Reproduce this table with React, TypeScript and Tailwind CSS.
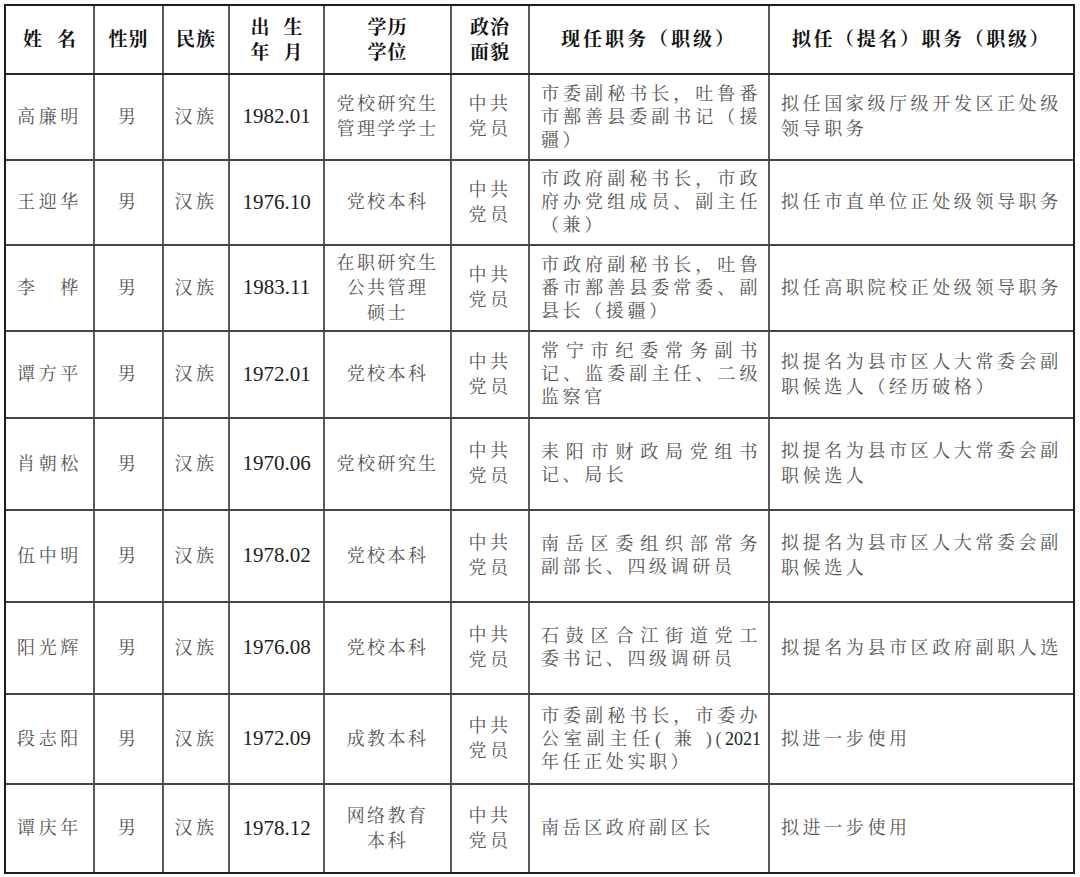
import React from "react";

interface Person {
  name: string;
  date: string;
  edu: string[];
  cur: React.ReactNode[];
  plan: string[];
  h: string;
}

const people: Person[] = [
  {
    name: "高廉明",
    date: "1982.01",
    edu: ["党校研究生", "管理学学士"],
    cur: ["市委副秘书长，吐鲁番", "市鄯善县委副书记（援", "疆）"],
    plan: ["拟任国家级厅级开发区正处级", "领导职务"],
    h: "h-[86px]",
  },
  {
    name: "王迎华",
    date: "1976.10",
    edu: ["党校本科"],
    cur: ["市政府副秘书长，市政", "府办党组成员、副主任", "（兼）"],
    plan: ["拟任市直单位正处级领导职务"],
    h: "h-[85px]",
  },
  {
    name: "李　桦",
    date: "1983.11",
    edu: ["在职研究生", "公共管理", "硕士"],
    cur: ["市政府副秘书长，吐鲁", "番市鄯善县委常委、副", "县长（援疆）"],
    plan: ["拟任高职院校正处级领导职务"],
    h: "h-[86px]",
  },
  {
    name: "谭方平",
    date: "1972.01",
    edu: ["党校本科"],
    cur: ["常宁市纪委常务副书", "记、监委副主任、二级", "监察官"],
    plan: ["拟提名为县市区人大常委会副", "职候选人（经历破格）"],
    h: "h-[87px]",
  },
  {
    name: "肖朝松",
    date: "1970.06",
    edu: ["党校研究生"],
    cur: ["耒阳市财政局党组书", "记、局长"],
    plan: ["拟提名为县市区人大常委会副", "职候选人"],
    h: "h-[92px]",
  },
  {
    name: "伍中明",
    date: "1978.02",
    edu: ["党校本科"],
    cur: ["南岳区委组织部常务", "副部长、四级调研员"],
    plan: ["拟提名为县市区人大常委会副", "职候选人"],
    h: "h-[92px]",
  },
  {
    name: "阳光辉",
    date: "1976.08",
    edu: ["党校本科"],
    cur: ["石鼓区合江街道党工", "委书记、四级调研员"],
    plan: ["拟提名为县市区政府副职人选"],
    h: "h-[92px]",
  },
  {
    name: "段志阳",
    date: "1972.09",
    edu: ["成教本科"],
    cur: [
      "市委副秘书长，市委办",
      <>
        公室副主任( 兼 )(<span className="text-[#222] tracking-normal">2021</span>
      </>,
      "年任正处实职）",
    ],
    plan: ["拟进一步使用"],
    h: "h-[90px]",
  },
  {
    name: "谭庆年",
    date: "1978.12",
    edu: ["网络教育", "本科"],
    cur: ["南岳区政府副区长"],
    plan: ["拟进一步使用"],
    h: "h-[87px]",
  },
];

const vline = "border-r-2 border-[#5a5a5a]";

const App = () => {
  return (
    <div className="w-[1080px] h-[877px] bg-white pt-[4px] pl-[4px] font-['Liberation_Serif','Noto_Serif_CJK_SC','Noto_Sans_CJK_SC',serif]">
      <div className="w-[1071px] border-2 border-[#1e1e1e]">
        {/* Header */}
        <div className="flex h-[69px] border-b-2 border-[#2a2a2a] text-[19px] font-bold text-[#111] leading-[25px]">
          <div className={`w-[89px] flex items-center justify-center ${vline}`}>
            姓<span className="inline-block w-[15px]" />名
          </div>
          <div className={`w-[69px] flex items-center justify-center tracking-[1px] ${vline}`}>
            性别
          </div>
          <div className={`w-[66px] flex items-center justify-center tracking-[1px] ${vline}`}>
            民族
          </div>
          <div className={`w-[95px] flex flex-col items-center justify-center ${vline}`}>
            <div>
              出<span className="inline-block w-[14px]" />生
            </div>
            <div>
              年<span className="inline-block w-[14px]" />月
            </div>
          </div>
          <div className={`w-[127px] flex flex-col items-center justify-center tracking-[1px] ${vline}`}>
            <div>学历</div>
            <div>学位</div>
          </div>
          <div className={`w-[78px] flex flex-col items-center justify-center tracking-[1px] ${vline}`}>
            <div>政治</div>
            <div>面貌</div>
          </div>
          <div className={`w-[240px] flex items-center justify-center tracking-[3px] ${vline}`}>
            现任职务（职级）
          </div>
          <div className="flex-1 flex items-center justify-center tracking-[2.6px]">
            拟任（提名）职务（职级）
          </div>
        </div>

        {/* Body rows */}
        {people.map((p, i) => (
          <div
            key={p.name}
            className={`flex ${p.h} ${
              i === people.length - 1 ? "" : "border-b-2 border-[#444]"
            } text-[18px] text-[#555] tracking-[3.6px]`}
          >
            <div className={`w-[89px] flex items-center justify-center ${vline}`}>
              {p.name}
            </div>
            <div className={`w-[69px] flex items-center justify-center ${vline}`}>
              男
            </div>
            <div className={`w-[66px] flex items-center justify-center ${vline}`}>
              汉族
            </div>
            <div
              className={`w-[95px] flex items-center justify-center text-[21px] text-[#1c1c1c] tracking-normal ${vline}`}
            >
              {p.date}
            </div>
            <div
              className={`w-[127px] flex flex-col items-center justify-center leading-[25px] tracking-[2.4px] ${vline}`}
            >
              {p.edu.map((l, k) => (
                <div key={k}>{l}</div>
              ))}
            </div>
            <div
              className={`w-[78px] flex flex-col items-center justify-center leading-[25px] ${vline}`}
            >
              <div>中共</div>
              <div>党员</div>
            </div>
            <div
              className={`w-[240px] flex flex-col justify-center pl-[11px] pr-[7px] leading-[23px] ${vline}`}
            >
              {p.cur.map((l, k) => (
                <div
                  key={k}
                  className={
                    k < p.cur.length - 1
                      ? "text-justify [text-align-last:justify] whitespace-nowrap"
                      : "whitespace-nowrap"
                  }
                >
                  {l}
                </div>
              ))}
            </div>
            <div className="flex-1 flex flex-col justify-center pl-[11px] leading-[25px]">
              {p.plan.map((l, k) => (
                <div key={k} className="whitespace-nowrap">
                  {l}
                </div>
              ))}
            </div>
          </div>
        ))}
      </div>
    </div>
  );
};

export default App;
